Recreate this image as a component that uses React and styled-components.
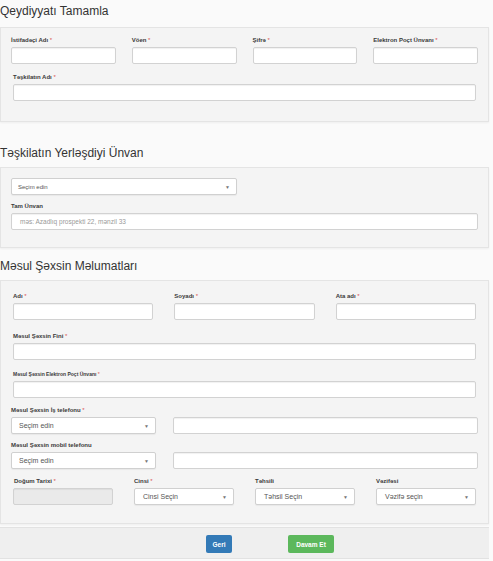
import React from "react";
import styled, { createGlobalStyle } from "styled-components";

const GlobalStyle = createGlobalStyle`
  * { box-sizing: border-box; }
  body {
    margin: 0;
    background: #fafafa;
    font-family: "Liberation Sans", Arial, sans-serif;
    color: #333;
  }
`;

const Page = styled.div`
  width: 493px;
  padding-right: 4px;
`;

const Heading = styled.div`
  font-size: 12px;
  line-height: 22px;
  color: #333;
  padding-top: ${(p) => p.$top || 0}px;
  height: ${(p) => p.$height}px;
`;

const Panel = styled.div`
  background: #f4f4f4;
  border: 1px solid #e4e4e4;
  box-shadow: 0 1px 2px rgba(0, 0, 0, 0.05);
  padding: ${(p) => p.$pt}px 10px ${(p) => p.$pb}px;
`;

const Row = styled.div`
  display: grid;
  grid-template-columns: ${(p) => p.$cols || "1fr"};
  column-gap: ${(p) => p.$gap || 16}px;
  margin-top: ${(p) => p.$mt || 0}px;
  padding: 0 ${(p) => p.$inset || 0}px;
  align-items: end;
`;

const Field = styled.div`
  display: flex;
  flex-direction: column;
`;

const Label = styled.label`
  font-size: ${(p) => p.$size || 6}px;
  line-height: 8px;
  height: 8px;
  margin-bottom: 3px;
  font-weight: bold;
  color: #3a3a3a;
  white-space: nowrap;
  padding-left: ${(p) => p.$indent || 0}px;
`;

const Req = styled.span`
  color: #d9534f;
  font-weight: normal;
`;

const Input = styled.div`
  height: 17px;
  background: ${(p) => (p.$disabled ? "#eaeaea" : "#fff")};
  border: 1px solid #d2d2d2;
  border-radius: 2px;
  box-shadow: inset 0 1px 1px rgba(0, 0, 0, 0.06);
  font-size: 6.5px;
  color: #999;
  display: flex;
  align-items: center;
  padding-left: 8px;
`;

const Select = styled.div`
  height: 17px;
  background: #fff;
  border: 1px solid #d0d0d0;
  border-radius: 2px;
  box-shadow: 0 1px 1px rgba(0, 0, 0, 0.05);
  display: flex;
  align-items: center;
  justify-content: space-between;
  padding: 0 6px 0 ${(p) => p.$pad || 7}px;
  font-size: ${(p) => p.$size || 7}px;
  color: #555;
`;

const Caret = styled.span`
  font-size: 5px;
  color: #777;
`;

const Footer = styled.div`
  margin-top: 3px;
  background: #efefef;
  border-top: 1px solid #e2e2e2;
  border-bottom: 1px solid #e2e2e2;
  height: 32px;
  display: flex;
  align-items: center;
  padding-left: 206px;
  gap: 56px;
`;

const Button = styled.button`
  height: 18px;
  width: ${(p) => p.$w}px;
  border: none;
  border-radius: 2px;
  background: ${(p) => p.$bg};
  color: #fff;
  font-family: "Liberation Sans", Arial, sans-serif;
  font-size: 6.5px;
  font-weight: bold;
  padding: 0;
  margin-top: 2px;
`;

const Lbl = ({ children, req, ...rest }) => (
  <Label {...rest}>
    {children}
    {req && <Req> *</Req>}
  </Label>
);

const Sel = ({ text, ...rest }) => (
  <Select {...rest}>
    <span>{text}</span>
    <Caret>▼</Caret>
  </Select>
);

export default function App() {
  return (
    <Page>
      <GlobalStyle />
      <Heading $height={27}>Qeydiyyatı Tamamla</Heading>
      <Panel $pt={8} $pb={20}>
        <Row $cols="repeat(4, 1fr)" $gap={16}>
          <Field>
            <Lbl req>İstifadəçi Adı</Lbl>
            <Input />
          </Field>
          <Field>
            <Lbl req>Vöen</Lbl>
            <Input />
          </Field>
          <Field>
            <Lbl req>Şifrə</Lbl>
            <Input />
          </Field>
          <Field>
            <Lbl req>Elektron Poçt Ünvanı</Lbl>
            <Input />
          </Field>
        </Row>
        <Row $mt={9} $inset={2}>
          <Field>
            <Lbl req>Təşkilatın Adı</Lbl>
            <Input />
          </Field>
        </Row>
      </Panel>

      <Heading $top={20} $height={45}>Təşkilatın Yerləşdiyi Ünvan</Heading>
      <Panel $pt={10} $pb={17}>
        <Row $cols="226px 1fr">
          <Sel text="Seçim edin" $size={6} $pad={6} />
        </Row>
        <Row $mt={7}>
          <Field>
            <Lbl>Tam Ünvan</Lbl>
            <Input>məs: Azadlıq prospekti 22, mənzil 33</Input>
          </Field>
        </Row>
      </Panel>

      <Heading $top={7} $height={32}>Məsul Şəxsin Məlumatları</Heading>
      <Panel $pt={11} $pb={18}>
        <Row $cols="repeat(3, 1fr)" $gap={21} $inset={2}>
          <Field>
            <Lbl req>Adı</Lbl>
            <Input />
          </Field>
          <Field>
            <Lbl req>Soyadı</Lbl>
            <Input />
          </Field>
          <Field>
            <Lbl req>Ata adı</Lbl>
            <Input />
          </Field>
        </Row>
        <Row $mt={12} $inset={2}>
          <Field>
            <Lbl req>Məsul Şəxsin Fini</Lbl>
            <Input />
          </Field>
        </Row>
        <Row $mt={10} $inset={2}>
          <Field>
            <Lbl req $size={5}>Məsul Şəxsin Elektron Poçt Ünvanı</Lbl>
            <Input />
          </Field>
        </Row>
        <Row $mt={8} $cols="145px 1fr" $gap={17}>
          <Field>
            <Lbl req>Məsul Şəxsin İş telefonu</Lbl>
            <Sel text="Seçim edin" />
          </Field>
          <Input />
        </Row>
        <Row $mt={7} $cols="145px 1fr" $gap={17}>
          <Field>
            <Lbl>Məsul Şəxsin mobil telefonu</Lbl>
            <Sel text="Seçim edin" />
          </Field>
          <Input />
        </Row>
        <Row $mt={8} $cols="repeat(4, 1fr)" $gap={21} $inset={2}>
          <Field>
            <Lbl req $indent={1}>Doğum Tarixi</Lbl>
            <Input $disabled />
          </Field>
          <Field>
            <Lbl req>Cinsi</Lbl>
            <Sel text="Cinsi Seçin" $pad={8} />
          </Field>
          <Field>
            <Lbl>Təhsili</Lbl>
            <Sel text="Təhsil Seçin" $pad={8} />
          </Field>
          <Field>
            <Lbl>Vəzifəsi</Lbl>
            <Sel text="Vəzifə seçin" $pad={8} />
          </Field>
        </Row>
      </Panel>

      <Footer>
        <Button $w={26} $bg="#337ab7">Geri</Button>
        <Button $w={46} $bg="#5cb85c">Davam Et</Button>
      </Footer>
    </Page>
  );
}
